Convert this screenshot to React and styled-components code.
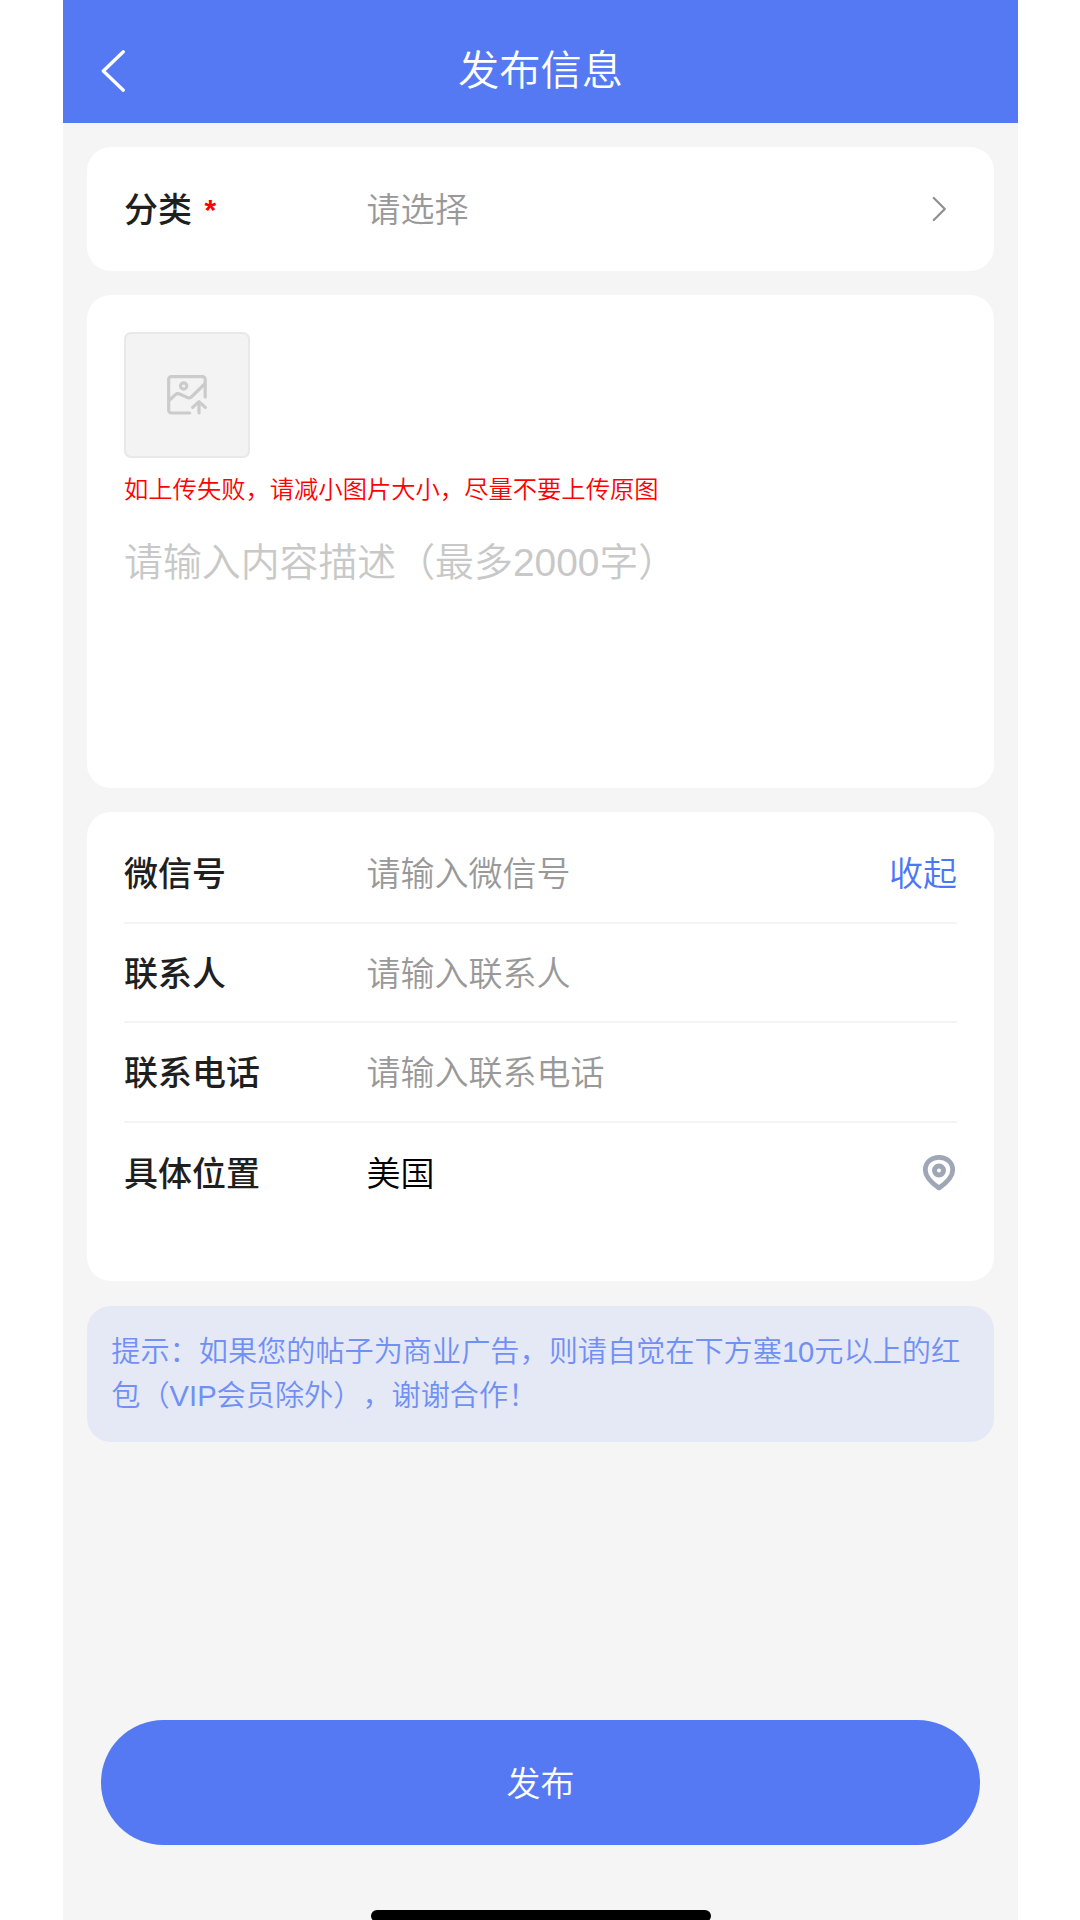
import React from "react";
import styled, { createGlobalStyle } from "styled-components";

const contacts = [
  { label: "微信号", text: "请输入微信号", action: "收起" },
  { label: "联系人", text: "请输入联系人" },
  { label: "联系电话", text: "请输入联系电话" },
  { label: "具体位置", text: "美国", filled: true, pin: true },
];

const App = () => {
  return (
    <>
      <GlobalStyle />
      <Phone>
        <Header>
          <HeaderSide>
            <BackIcon />
          </HeaderSide>
          <Title>发布信息</Title>
          <HeaderSide />
        </Header>
        <Content>
          <Card>
            <Row>
              <Label>
                分类<Required>*</Required>
              </Label>
              <Value>请选择</Value>
              <ArrowIcon />
            </Row>
          </Card>
          <EditorCard>
            <UploadBox>
              <UploadIcon />
            </UploadBox>
            <Warning>如上传失败，请减小图片大小，尽量不要上传原图</Warning>
            <Description>请输入内容描述（最多2000字）</Description>
          </EditorCard>
          <ContactCard>
            {contacts.map((item) => {
              return (
                <Row key={item.label} $line={!item.pin}>
                  <Label>{item.label}</Label>
                  <Value $filled={item.filled}>{item.text}</Value>
                  {item.action && <Fold>{item.action}</Fold>}
                  {item.pin && <PinIcon />}
                </Row>
              );
            })}
          </ContactCard>
          <Notice>
            提示：如果您的帖子为商业广告，则请自觉在下方塞10元以上的红包（VIP会员除外），谢谢合作！
          </Notice>
        </Content>
        <Footer>
          <SubmitBtn>发布</SubmitBtn>
          <HomeBar />
        </Footer>
      </Phone>
    </>
  );
};

const BackIcon = () => (
  <svg width="26" height="44" viewBox="0 0 26 44" fill="none">
    <path
      d="M22.3 2.8L2.3 22L22.3 41.2"
      stroke="#fff"
      strokeWidth="3.3"
      strokeLinecap="round"
      strokeLinejoin="round"
    />
  </svg>
);

const ArrowIcon = () => (
  <ArrowSvg width="14" height="26" viewBox="0 0 14 26" fill="none">
    <path
      d="M1.8 2L12.8 13L1.8 24"
      stroke="#8f8f8f"
      strokeWidth="2.2"
      strokeLinecap="round"
      strokeLinejoin="round"
    />
  </ArrowSvg>
);

const UploadIcon = () => (
  <svg width="40" height="40" viewBox="0 0 120 120" fill="none">
    <g
      stroke="#cbcbcb"
      strokeWidth="9.5"
      strokeLinecap="round"
      strokeLinejoin="round"
    >
      <path d="M114.500 66V13a8 8 0 0 0-8-8H13a8 8 0 0 0-8 8v93a8 8 0 0 0 8 8h55" />
      <circle cx="50" cy="33" r="9.5" />
      <path d="M6 77L25 59Q31 54 38 57L60 67Q67 71 73 66L113 27" />
      <path d="M96 114V80M77 97L96 80L115 97" />
    </g>
  </svg>
);

const PinIcon = () => (
  <PinSvg width="34" height="38" viewBox="0 0 34 38" fill="none">
    <path
      d="M17 34C9.500 28.700 3.300 23 3.300 15.900C3.300 8.500 9.400 3.300 17 3.300S30.700 8.500 30.700 15.900C30.700 23 24.500 28.700 17 34Z"
      stroke="#9fa6b6"
      strokeWidth="4.8"
      strokeLinejoin="round"
    />
    <circle cx="17" cy="16.500" r="4.500" stroke="#9fa6b6" strokeWidth="4.900" />
  </PinSvg>
);

const GlobalStyle = createGlobalStyle`
  * {
    box-sizing: border-box;
  }

  body {
    margin: 0;
    background: #fff;
    font-family: "Liberation Sans", "Noto Sans CJK SC", sans-serif;
    font-weight: 350;
    text-spacing-trim: space-all;
  }
`;

const Phone = styled.div`
  display: flex;
  flex-direction: column;
  width: 955px;
  height: 1920px;
  margin-left: 63px;
  background: #f5f5f5;
  overflow: hidden;
`;

const Header = styled.header`
  display: flex;
  align-items: center;
  height: 122.700px;
  padding: 19px 38px 0;
  background: #5479f3;
`;

const HeaderSide = styled.div`
  display: flex;
  width: 80px;
`;

const Title = styled.h1`
  flex: 1;
  margin: 0;
  font-size: 41.300px;
  font-weight: 350;
  line-height: 60px;
  text-align: center;
  color: #fff;
`;

const Content = styled.main`
  display: flex;
  flex-direction: column;
  gap: 24.300px;
  flex: 1;
  padding: 24.300px 24px 0;
`;

const Card = styled.section`
  padding: 12px 37px;
  background: #fff;
  border-radius: 24px;
`;

const EditorCard = styled(Card)`
  height: 493px;
  padding-top: 36.700px;
`;

const ContactCard = styled(Card)`
  height: 469px;
`;

const Row = styled.div`
  display: flex;
  align-items: center;
  height: 99.630px;
  font-size: 34px;
  line-height: 50px;
  border-bottom: ${(props) => (props.$line ? "2px solid #f4f4f4" : "none")};
`;

const Label = styled.div`
  display: flex;
  width: 242.500px;
  padding-top: 2px;
  font-weight: 500;
  color: #1f1f1f;
`;

const Required = styled.span`
  margin: 0 0 0 12.500px;
  font-size: 30px;
  font-weight: 700;
  color: #f00;
`;

const Value = styled.div`
  flex: 1;
  padding-top: 2px;
  color: ${(props) => (props.$filled ? "#000" : "#999")};
`;

const Fold = styled.div`
  padding-top: 2px;
  color: #4c76f6;
`;

const ArrowSvg = styled.svg`
  margin-right: 11px;
`;

const PinSvg = styled.svg`
  margin-right: 1px;
`;

const UploadBox = styled.div`
  display: flex;
  align-items: center;
  justify-content: center;
  width: 126px;
  height: 126.700px;
  background: #f3f3f3;
  border: 2px solid #e8e8e8;
  border-radius: 7px;
`;

const Warning = styled.p`
  margin: 14px 0 0;
  font-size: 24.300px;
  line-height: 36px;
  color: #f00;
`;

const Description = styled.div`
  margin-top: 24.500px;
  font-size: 38.900px;
  line-height: 60px;
  color: #c8c8c8;
`;

const Notice = styled.p`
  margin: 0;
  padding: 25.800px 24.300px 22.800px;
  font-size: 29.160px;
  line-height: 43.740px;
  color: #7090f5;
  background: #e5e8f5;
  border-radius: 24px;
`;

const Footer = styled.footer`
  display: flex;
  flex-direction: column;
  align-items: center;
  gap: 65.300px;
  height: 199.700px;
`;

const SubmitBtn = styled.button`
  flex: none;
  width: 879px;
  height: 124.700px;
  padding: 2px 0 0;
  font-family: inherit;
  font-size: 34px;
  font-weight: 350;
  line-height: 50px;
  color: #fff;
  background: #5479f3;
  border: 0;
  border-radius: 63px;
`;

const HomeBar = styled.div`
  flex: none;
  width: 340px;
  height: 12px;
  background: #000;
  border-radius: 6px;
`;

export default App;
